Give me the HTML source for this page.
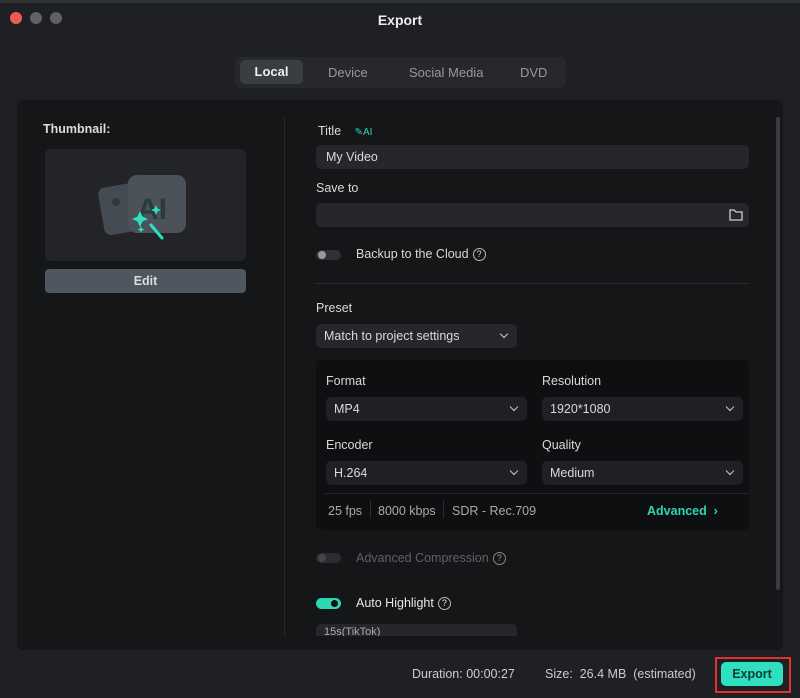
<!DOCTYPE html>
<html><head><style>
*{margin:0;padding:0;box-sizing:border-box}
body{width:800px;height:698px;background:#1e2023;font-family:"Liberation Sans",sans-serif;color:#d8d9db;position:relative;overflow:hidden;font-size:12.5px}
.a{position:absolute}
.dot{width:12px;height:12px;border-radius:50%;top:12px}
.field{background:#25272b;border-radius:5px;height:24px}
.chev{position:absolute;right:10px;top:7px;width:6px;height:6px;border-right:1.5px solid #ccc;border-bottom:1.5px solid #ccc;transform:rotate(45deg)}
.q{display:inline-block;width:13px;height:13px;border:1.2px solid #bbb;border-radius:50%;font-size:9px;text-align:center;line-height:11px;vertical-align:middle;margin-left:4px}
</style></head><body>
<div class="a" style="left:0;top:0;width:800px;height:3px;background:#2c3238"></div>
<div class="a dot" style="left:10px;background:#ee5a52"></div>
<div class="a dot" style="left:30px;background:#606164"></div>
<div class="a dot" style="left:50px;background:#606164"></div>
<div class="a" style="left:0;width:800px;top:12px;text-align:center;font-weight:bold;font-size:14px;color:#eee">Export</div>
<div class="a" style="left:235px;top:57px;width:331px;height:31px;background:#26282c;border-radius:6px"></div>
<div class="a" style="left:240px;top:60px;width:63px;height:24px;background:#3a3d42;border-radius:5px;text-align:center;line-height:24px;font-weight:bold;color:#eee;font-size:13px">Local</div>
<div class="a" style="left:328px;top:65px;color:#999;font-size:13px">Device</div>
<div class="a" style="left:409px;top:65px;color:#999;font-size:13px">Social Media</div>
<div class="a" style="left:520px;top:65px;color:#999;font-size:13px">DVD</div>
<div class="a" style="left:17px;top:100px;width:766px;height:550px;background:#151618;border-radius:6px"></div>
<div class="a" style="left:284px;top:117px;width:1px;height:520px;background:#26282b"></div>
<div class="a" style="left:776px;top:117px;width:4px;height:473px;background:#3a3c40;border-radius:2px"></div>
<div class="a" style="left:43px;top:122px;font-weight:bold;color:#ddd">Thumbnail:</div>
<div class="a" style="left:45px;top:149px;width:201px;height:112px;background:#222427;border-radius:6px">
<svg width="201" height="112"><rect x="56" y="36" width="40" height="48" rx="7" fill="#454b53" transform="rotate(-10 76 60)"/><circle cx="71" cy="53" r="4" fill="#33383e"/><rect x="83" y="26" width="58" height="58" rx="9" fill="#4c525a"/><text x="92" y="70" font-family="Liberation Sans" font-weight="bold" font-size="30" fill="#2a3b3c">AI</text><path d="M95 62l2.5 5.5 5.5 2.5-5.5 2.5-2.5 5.5-2.5-5.5-5.5-2.5 5.5-2.5z" fill="#2fe0c0"/><path d="M111 56l1.5 3.5 3.5 1.5-3.5 1.5-1.5 3.5-1.5-3.5-3.5-1.5 3.5-1.5z" fill="#2fe0c0"/><path d="M96 77l1 2.5 2.5 1-2.5 1-1 2.5-1-2.5-2.5-1 2.5-1z" fill="#2fe0c0"/><line x1="106" y1="76" x2="117" y2="89" stroke="#2fe0c0" stroke-width="3" stroke-linecap="round"/></svg></div>
<div class="a" style="left:45px;top:269px;width:201px;height:24px;background:#4e565f;border-radius:4px;text-align:center;line-height:24px;font-weight:bold;color:#ddd">Edit</div>
<div class="a" style="left:318px;top:124px">Title <span style="color:#2fd6b4;font-size:10px;margin-left:10px">✎AI</span></div>
<div class="a field" style="left:316px;top:145px;width:433px;padding:5px 10px">My Video</div>
<div class="a" style="left:316px;top:181px">Save to</div>
<div class="a field" style="left:316px;top:203px;width:433px"><svg class="a" style="right:6px;top:5px" width="14" height="13"><path d="M1 2h4l2 2h6v8H1z" fill="none" stroke="#ccc" stroke-width="1.3"/></svg></div>
<div class="a" style="left:316px;top:250px;width:25px;height:10px;background:#2f3134;border-radius:5px"><div style="width:8px;height:8px;margin:1px 2px;background:#999;border-radius:50%"></div></div>
<div class="a" style="left:356px;top:247px">Backup to the Cloud<span class="q">?</span></div>
<div class="a" style="left:316px;top:283px;width:433px;height:1px;background:#2a2c30"></div>
<div class="a" style="left:316px;top:301px">Preset</div>
<div class="a field" style="left:316px;top:324px;width:201px;padding:5px 8px">Match to project settings<div class="chev"></div></div>
<div class="a" style="left:316px;top:360px;width:433px;height:170px;background:#0e0f10;border-radius:5px"></div>
<div class="a" style="left:326px;top:374px">Format</div>
<div class="a" style="left:542px;top:374px">Resolution</div>
<div class="a field" style="left:326px;top:397px;width:201px;padding:5px 8px;background:#1e2023">MP4<div class="chev"></div></div>
<div class="a field" style="left:542px;top:397px;width:201px;padding:5px 8px;background:#1e2023">1920*1080<div class="chev"></div></div>
<div class="a" style="left:326px;top:438px">Encoder</div>
<div class="a" style="left:542px;top:438px">Quality</div>
<div class="a field" style="left:326px;top:461px;width:201px;padding:5px 8px;background:#1e2023">H.264<div class="chev"></div></div>
<div class="a field" style="left:542px;top:461px;width:201px;padding:5px 8px;background:#1e2023">Medium<div class="chev"></div></div>
<div class="a" style="left:324px;top:493px;width:425px;height:1px;background:#222428"></div>
<div class="a" style="left:328px;top:504px;color:#aaa">25 fps</div>
<div class="a" style="left:370px;top:500px;width:1px;height:18px;background:#2a2c30"></div>
<div class="a" style="left:378px;top:504px;color:#aaa">8000 kbps</div>
<div class="a" style="left:443px;top:500px;width:1px;height:18px;background:#2a2c30"></div>
<div class="a" style="left:452px;top:504px;color:#aaa">SDR - Rec.709</div>
<div class="a" style="left:647px;top:504px;color:#2fd6b4;font-weight:bold">Advanced &nbsp;›</div>
<div class="a" style="left:316px;top:553px;width:25px;height:10px;background:#2a2c2f;border-radius:5px"><div style="width:8px;height:8px;margin:1px 2px;background:#444;border-radius:50%"></div></div>
<div class="a" style="left:356px;top:551px;color:#5f6165">Advanced Compression<span class="q" style="border-color:#888;color:#999">?</span></div>
<div class="a" style="left:316px;top:598px;width:25px;height:11px;background:#2fd6b4;border-radius:6px"><div style="width:7px;height:7px;margin:2px 0 0 15px;background:#111;border-radius:50%"></div></div>
<div class="a" style="left:356px;top:596px;color:#e8e8e8">Auto Highlight<span class="q">?</span></div>
<div class="a" style="left:316px;top:624px;width:201px;height:12px;background:#25272b;border-radius:5px 5px 0 0;overflow:hidden;padding:2px 8px;font-size:11px;color:#aaa">15s(TikTok)</div>
<div class="a" style="left:412px;top:667px;color:#ccc">Duration:&nbsp;00:00:27</div>
<div class="a" style="left:545px;top:667px;color:#ccc">Size:&nbsp; 26.4 MB&nbsp; (estimated)</div>
<div class="a" style="left:715px;top:657px;width:76px;height:36px;border:2px solid #e0312a"></div>
<div class="a" style="left:721px;top:662px;width:62px;height:24px;background:#2fe0c0;border-radius:5px;text-align:center;line-height:24px;font-weight:bold;color:#0f3b34">Export</div>
</body></html>
